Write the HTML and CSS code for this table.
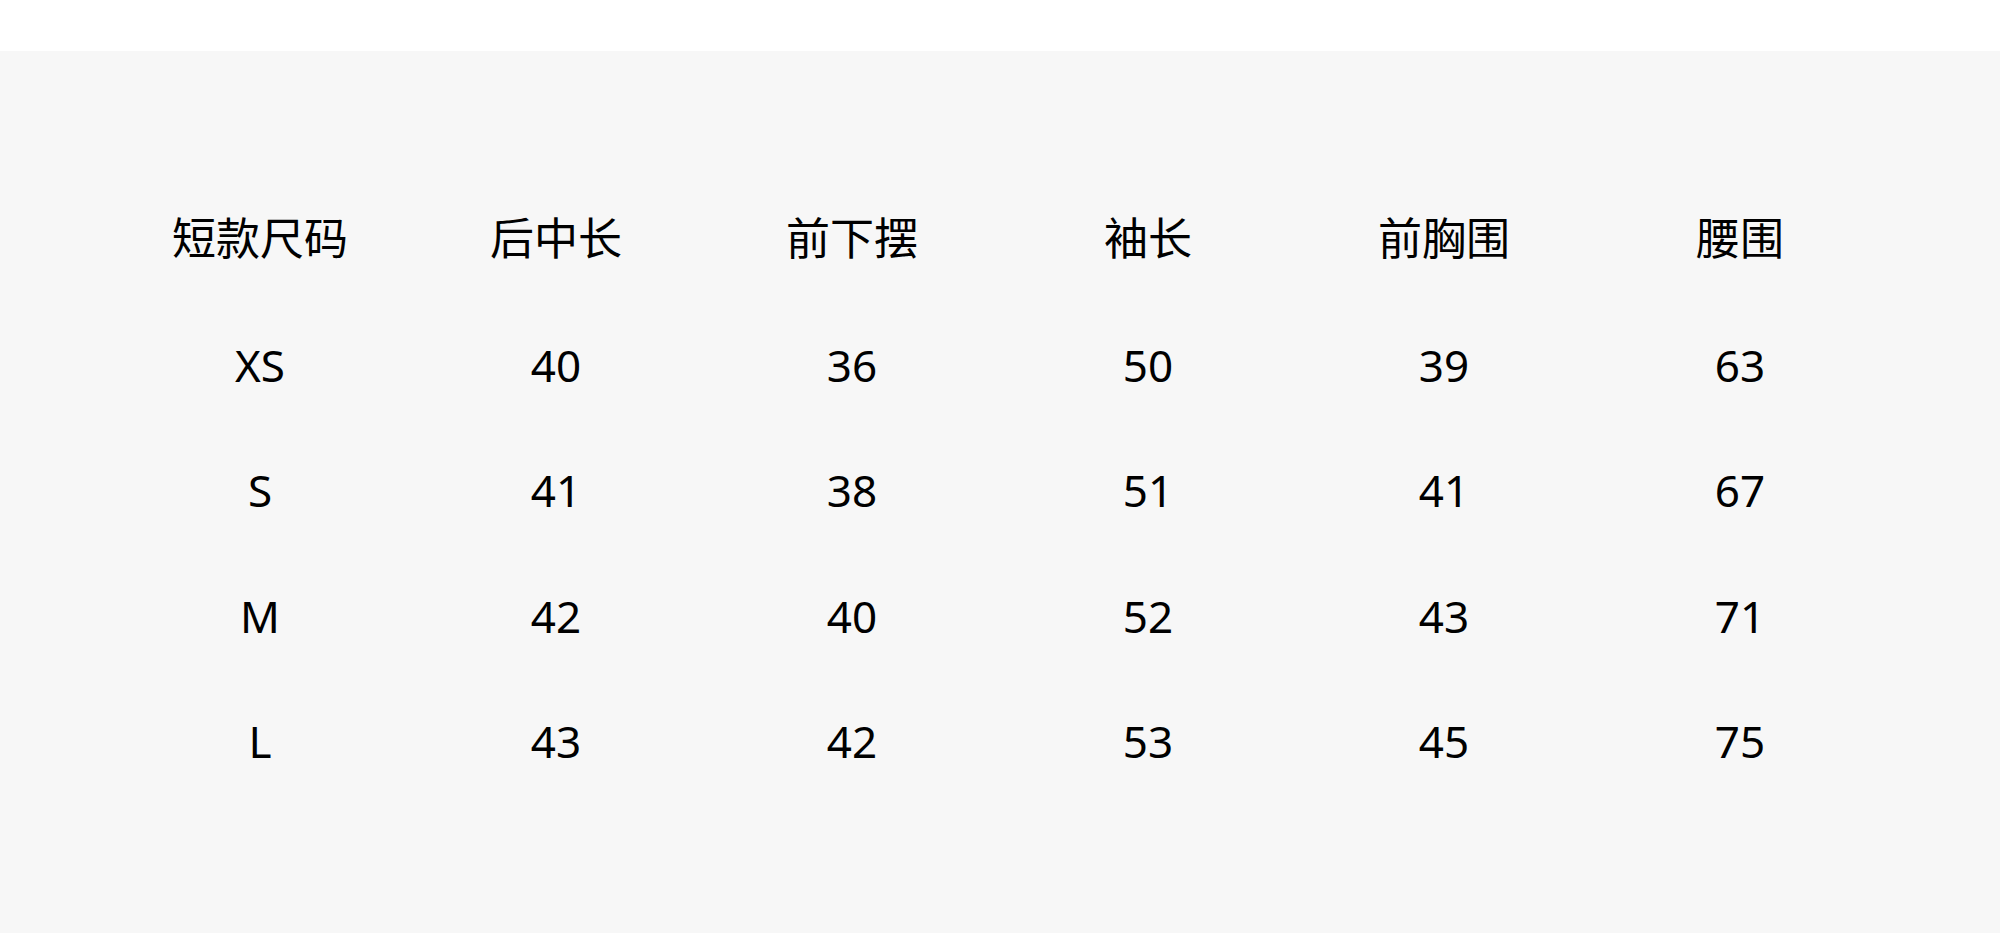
FILE: index.html
```html
<!DOCTYPE html>
<html lang="zh">
<head>
<meta charset="utf-8">
<title>尺码表</title>
<link rel="stylesheet" href="styles.css">
</head>
<body>
<div class="topbar"></div>
<section class="panel">
  <div class="size-table">
    <div class="cell head">短款尺码</div>
    <div class="cell head">后中长</div>
    <div class="cell head">前下摆</div>
    <div class="cell head">袖长</div>
    <div class="cell head">前胸围</div>
    <div class="cell head">腰围</div>

    <div class="cell">XS</div>
    <div class="cell">40</div>
    <div class="cell">36</div>
    <div class="cell">50</div>
    <div class="cell">39</div>
    <div class="cell">63</div>

    <div class="cell">S</div>
    <div class="cell">41</div>
    <div class="cell">38</div>
    <div class="cell">51</div>
    <div class="cell">41</div>
    <div class="cell">67</div>

    <div class="cell">M</div>
    <div class="cell">42</div>
    <div class="cell">40</div>
    <div class="cell">52</div>
    <div class="cell">43</div>
    <div class="cell">71</div>

    <div class="cell">L</div>
    <div class="cell">43</div>
    <div class="cell">42</div>
    <div class="cell">53</div>
    <div class="cell">45</div>
    <div class="cell">75</div>
  </div>
</section>
</body>
</html>
```

FILE: styles.css
```css
html, body {
  margin: 0;
  padding: 0;
  background: #ffffff;
}

body {
  font-family: "Noto Sans", "Noto Sans CJK SC", sans-serif;
  color: #000000;
}

.topbar {
  height: 51px;
  background: #ffffff;
}

.panel {
  background: #f7f7f7;
  min-height: 882px;
  padding-top: 119px;
  box-sizing: border-box;
}

.size-table {
  width: 1776px;
  margin: 0 auto;
  display: grid;
  grid-template-columns: repeat(6, 296px);
  grid-template-rows: 132px repeat(4, 125.5px);
}

.cell {
  display: flex;
  align-items: center;
  justify-content: center;
  font-size: 44px;
  line-height: 1;
}

.cell.head {
  font-family: "Noto Sans CJK SC", sans-serif;
  font-size: 44px;
}
```
